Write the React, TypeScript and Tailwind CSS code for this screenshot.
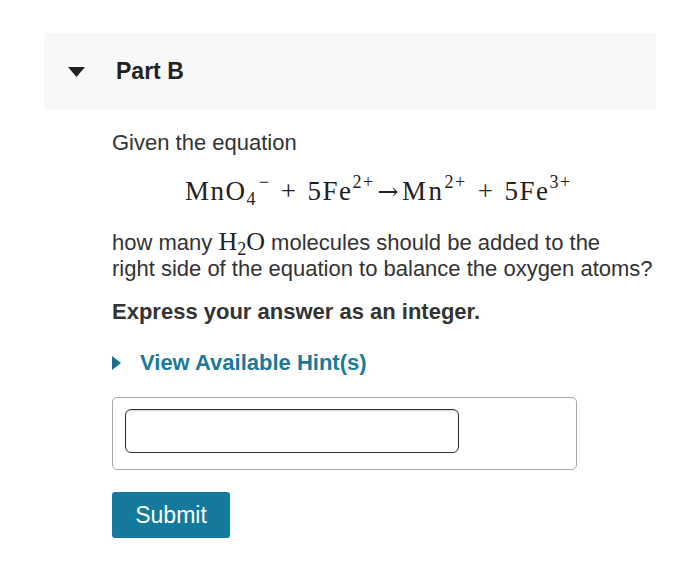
export default function App() {
  const sup = 'relative -top-[12px] text-[18px] tracking-[1.5px]'
  return (
    <div className="min-h-screen bg-white pt-[33px] pl-[44px] text-[#333333] font-['Liberation_Sans',Arial,sans-serif]">
      <div className="w-[612px]">
        {/* Part header */}
        <div className="flex h-[77px] items-center bg-[#f8f8f8]">
          <svg width="17" height="10" viewBox="0 0 17 10" className="ml-[24px]">
            <polygon points="0,0 17,0 8.5,10" fill="#222222" />
          </svg>
          <h2 className="ml-[31px] text-[23px] font-bold text-[#222222]">Part B</h2>
        </div>

        <div className="pl-[68px]">
          <p className="mt-[20px] text-[22px] leading-[26px]">Given the equation</p>

          <div className="mt-[20px] pl-[73px] font-['Liberation_Serif','Times_New_Roman',serif] text-[27px] leading-[30px] tracking-[1.5px] text-[#222222]">
            <span className="whitespace-nowrap">
              MnO<sub className="text-[18px]">4</sub>
              <sup className={'ml-[2px] ' + sup}>−</sup>
              <span className="mx-[10px]">+</span>5Fe<sup className={sup}>2+</sup>
              <span className="ml-[3px] mr-[2px] font-['DejaVu_Serif',serif] text-[25px] font-light">→</span>
              <span className="tracking-[2.5px]">Mn</span>
              <sup className={sup}>2+</sup>
              <span className="ml-[11px] mr-[10px]">+</span>5Fe<sup className={sup}>3+</sup>
            </span>
          </div>

          <p className="mt-[22px] w-[545px] text-[22px] leading-[26px]">
            how many{' '}
            <span className="font-['Liberation_Serif','Times_New_Roman',serif] text-[26px] leading-none text-[#222222]">
              H<sub className="text-[18px]">2</sub>O
            </span>{' '}
            molecules should be added to the
            <br />
            right side of the equation to balance the oxygen atoms?
          </p>

          <p className="mt-[17px] text-[22px] font-bold leading-[26px]">Express your answer as an integer.</p>

          <div className="mt-[25px] flex items-center">
            <svg width="9" height="14" viewBox="0 0 9 14">
              <polygon points="0,0 9,7 0,14" fill="#1a6f8f" />
            </svg>
            <span className="ml-[19px] text-[22px] font-bold leading-[26px] text-[#1a7a9c]">View Available Hint(s)</span>
          </div>

          <div className="mt-[21px] w-[465px] rounded-[5px] border border-[#aaaaaa] pl-[12px] pt-[11px] pb-[16px]">
            <input
              type="text"
              className="block h-[44px] w-[334px] rounded-[6px] border border-[#333333] bg-white shadow-[inset_0_1px_2px_rgba(0,0,0,0.2)] outline-none"
            />
          </div>

          <button className="mt-[22px] h-[46px] w-[118px] rounded-[3px] bg-[#137a9c] text-[23px] text-white">
            Submit
          </button>
        </div>
      </div>
    </div>
  )
}
